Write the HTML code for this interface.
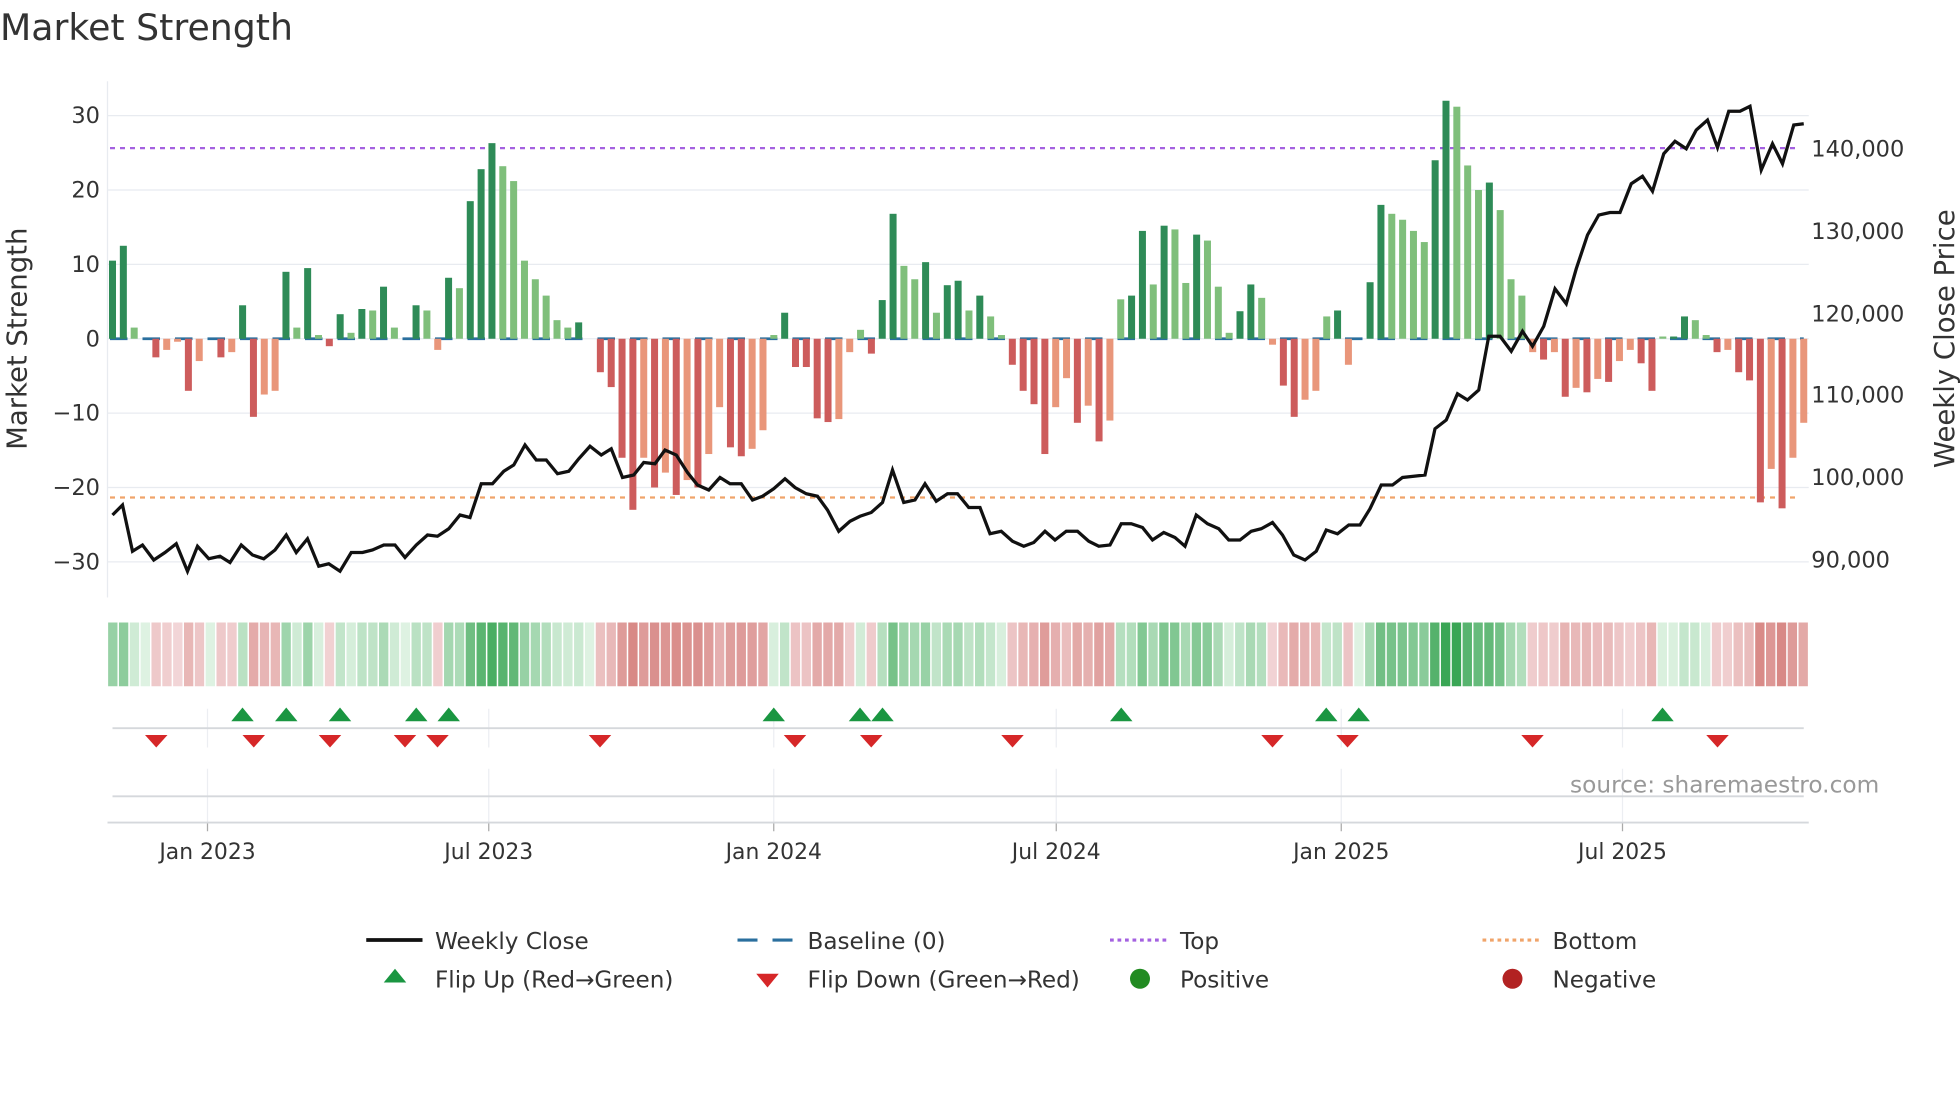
<!DOCTYPE html>
<html><head><meta charset="utf-8"><style>
html,body{margin:0;padding:0;background:#fff;width:1960px;height:1102px;overflow:hidden}
svg{display:block}
text{font-family:"DejaVu Sans","Liberation Sans",sans-serif;fill:#333}
</style></head><body>
<svg id="s" width="1960" height="1102" viewBox="0 0 1568 881.6" xmlns="http://www.w3.org/2000/svg">
<text x="0" y="32" font-size="29">Market Strength</text>
<g id="grid"></g>
<g id="bars"></g>
<g id="heat"></g>
<g id="marks"></g>
<g id="price"></g>
<text x="1256" y="634" font-size="18.6" style="fill:#999">source: sharemaestro.com</text>
<text transform="translate(21,271) rotate(-90)" text-anchor="middle" font-size="22">Market Strength</text>
<text transform="translate(1563,271) rotate(-90)" text-anchor="middle" font-size="22">Weekly Close Price</text>
<g font-size="18.5">
<line x1="293" y1="752" x2="338" y2="752" stroke="#111" stroke-width="3"/>
<text x="348" y="759">Weekly Close</text>
<line x1="590" y1="752" x2="606" y2="752" stroke="#2a6f9e" stroke-width="2.5"/>
<line x1="618" y1="752" x2="634" y2="752" stroke="#2a6f9e" stroke-width="2.5"/>
<text x="646" y="759">Baseline (0)</text>
<line x1="888" y1="752" x2="933" y2="752" stroke="#a461e0" stroke-width="2.5" stroke-dasharray="3,3"/>
<text x="944" y="759">Top</text>
<line x1="1186" y1="752" x2="1231" y2="752" stroke="#f0a46a" stroke-width="2.5" stroke-dasharray="3,3"/>
<text x="1242" y="759">Bottom</text>
<polygon points="316,775 307,786 325,786" fill="#1a9641"/>
<text x="348" y="790">Flip Up (Red→Green)</text>
<polygon points="605,779 623,779 614,790" fill="#d62728"/>
<text x="646" y="790">Flip Down (Green→Red)</text>
<circle cx="912" cy="783" r="8" fill="#228b22"/>
<text x="944" y="790">Positive</text>
<circle cx="1210" cy="783" r="8" fill="#b22222"/>
<text x="1242" y="790">Negative</text>
</g>
</svg>
<script>
var NS="http://www.w3.org/2000/svg";
function el(p,t,a,txt){var e=document.createElementNS(NS,t);for(var k in a)e.setAttribute(k,a[k]);if(txt!=null)e.textContent=txt;document.getElementById(p).appendChild(e);return e;}
var Y=function(v){return 271-v*5.95;};
[30,20,10,0,-10,-20,-30].forEach(function(v){
 el("grid","line",{x1:86,x2:1447,y1:Y(v),y2:Y(v),stroke:"#e8ebf0","stroke-width":1});
 el("grid","text",{x:80,y:Y(v)+6,"text-anchor":"end","font-size":18},(v<0?"\u2212"+(-v):v));
});
el("grid","line",{x1:86,x2:86,y1:65,y2:478,stroke:"#e8ebf0"});
[[140000,119],[130000,185],[120000,251],[110000,316],[100000,382],[90000,448]].forEach(function(p){
 el("grid","text",{x:1449,y:p[1]+6,"font-size":18},p[0].toLocaleString("en-US"));
});
el("grid","line",{x1:88,x2:1440,y1:118.5,y2:118.5,stroke:"#a461e0","stroke-width":1.8,"stroke-dasharray":"4,4"});
el("grid","line",{x1:88,x2:1440,y1:398,y2:398,stroke:"#f0a46a","stroke-width":1.8,"stroke-dasharray":"4,4"});
var ticks=[[166,"Jan 2023"],[391,"Jul 2023"],[619,"Jan 2024"],[845,"Jul 2024"],[1073,"Jan 2025"],[1298,"Jul 2025"]];
ticks.forEach(function(t){
 el("grid","line",{x1:t[0],x2:t[0],y1:567,y2:598,stroke:"#eceef2"});
 el("grid","line",{x1:t[0],x2:t[0],y1:615,y2:658,stroke:"#eceef2"});
 el("grid","line",{x1:t[0],x2:t[0],y1:658,y2:665,stroke:"#aaa"});
 el("grid","text",{x:t[0],y:687,"text-anchor":"middle","font-size":17.5},t[1]);
});
el("grid","line",{x1:90,x2:1443,y1:582.5,y2:582.5,stroke:"#d5d8dc","stroke-width":1.5});
el("grid","line",{x1:90,x2:1443,y1:637,y2:637,stroke:"#d5d8dc","stroke-width":1.5});
el("grid","line",{x1:86,x2:1447,y1:658,y2:658,stroke:"#d5d8dc","stroke-width":1.5});
var V=[10.5,12.5,1.5,0,-2.5,-1.5,-0.4,-7,-3,0,
-2.5,-1.8,4.5,-10.5,-7.5,-7,9,1.5,9.5,0.5,
-1,3.3,0.8,4,3.8,7,1.5,0,4.5,3.8,
-1.5,8.2,6.8,18.5,22.8,26.3,23.2,21.2,10.5,8,
5.8,2.5,1.5,2.2,0,-4.5,-6.5,-16,-23,-16,
-20,-18,-21,-19,-20,-15.5,-9.2,-14.6,-15.8,-14.8,
-12.3,0.5,3.5,-3.8,-3.8,-10.7,-11.2,-10.8,-1.8,1.2,
-2,5.2,16.8,9.8,8,10.3,3.5,7.2,7.8,3.8,
5.8,3,0.5,-3.5,-7,-8.8,-15.5,-9.2,-5.3,-11.3,
-9,-13.8,-11,5.3,5.8,14.5,7.3,15.2,14.7,7.5,
14,13.2,7,0.8,3.7,7.3,5.5,-0.8,-6.3,-10.5,
-8.2,-7,3,3.8,-3.5,0,7.6,18,16.8,16,
14.5,13,24,32,31.2,23.3,20,21,17.3,8,
5.8,-1.8,-2.8,-1.8,-7.8,-6.6,-7.2,-5.4,-5.8,-3,
-1.5,-3.3,-7,0.3,0.3,3,2.5,0.5,-1.8,-1.5,
-4.5,-5.6,-22,-17.5,-22.8,-16,-11.3];
var n=V.length,sp=(1443-90)/(n-1);
el("bars","line",{x1:88,x2:1443,y1:271,y2:271,stroke:"#2a6f9e","stroke-width":2.2,"stroke-dasharray":"14,12"});
function mix(a,b,t){var r="#";for(var i=0;i<3;i++){var x=Math.round(a[i]+(b[i]-a[i])*t);r+=("0"+x.toString(16)).slice(-2);}return r;}
for(var i=0;i<n;i++){
 var v=V[i],x=90+sp*i,prev=i?Math.abs(V[i-1]):0,up=Math.abs(v)>=prev;
 var c=v>=0?(up?"#2e8b57":"#7fbf7b"):(up?"#cd5c5c":"#e9967a");
 if(v!=0){var y0=Math.min(Y(v),271),h=Math.abs(v*5.95);
  el("bars","rect",{x:x-2.8,y:y0,width:5.6,height:Math.max(h,1),fill:c});}
 var t=Math.min(1,Math.abs(v)/30);
 var hc=v>=0?mix([222,242,226],[58,166,85],Math.pow(t,0.8)):mix([244,218,220],[210,120,116],Math.pow(t,0.7));
 var cw=(1447-86)/n;
 el("heat","rect",{x:86+cw*i+0.5,y:498,width:cw-1.2,height:51,fill:hc});
}
[194,229,272,333,359,619,688,706,897,1061,1087,1330].forEach(function(x){
 el("marks","polygon",{points:(x)+",566 "+(x-9)+",577 "+(x+9)+",577",fill:"#1a9641"});});
[125,203,264,324,350,480,636,697,810,1018,1078,1226,1374].forEach(function(x){
 el("marks","polygon",{points:(x-9)+",588 "+(x+9)+",588 "+x+",598",fill:"#d62728"});});
var P=[90,412,98,404,106,441,114,436,123,448,132,442,141,435,150,457,158,437,167,447,176,445,184,450,193,436,202,444,211,447,220,440,229,428,237,442,246,431,255,453,263,451,272,457,281,442,290,442,298,440,307,436,316,436,324,446,333,436,342,428,350,429,359,423,368,412,376,414,385,387,394,387,403,377,411,372,420,356,429,368,437,368,446,379,455,377,463,367,472,357,481,364,489,359,498,382,507,380,515,370,524,371,532,360,541,364,550,378,558,388,567,392,576,382,584,387,593,387,602,400,610,397,619,391,628,383,636,390,645,395,654,397,662,408,671,425,680,417,688,413,697,410,706,402,714,376,723,402,732,400,740,387,749,401,758,395,766,395,775,406,784,406,792,427,801,425,810,433,819,437,827,434,836,425,844,432,853,425,862,425,871,433,879,437,888,436,897,419,905,419,914,422,922,432,931,426,940,430,948,437,957,412,966,419,975,423,983,432,992,432,1001,425,1009,423,1018,418,1026,428,1035,444,1044,448,1053,441,1061,424,1070,427,1079,420,1088,420,1096,407,1105,388,1114,388,1122,382,1131,381,1140,380,1148,343,1157,336,1166,315,1174,320,1183,312,1191,269,1200,269,1209,281,1218,265,1226,277,1235,261,1244,231,1253,243,1261,215,1270,188,1279,172,1288,170,1296,170,1305,147,1314,141,1322,153,1331,123,1340,113,1349,119,1357,104,1366,96,1374,118,1383,89,1392,89,1400,85,1409,136,1418,115,1426,131,1435,100,1443,99];
var d="";for(var j=0;j<P.length;j+=2)d+=(j?"L":"M")+P[j]+","+P[j+1];
el("price","path",{d:d,fill:"none",stroke:"#111","stroke-width":2.6,"stroke-linejoin":"miter"});
</script>
</body></html>
